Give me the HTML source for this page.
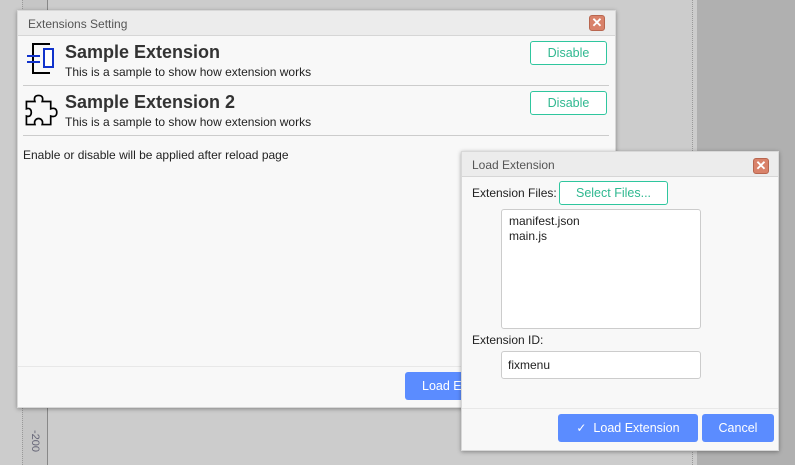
<!DOCTYPE html>
<html><head><style>
*{box-sizing:border-box;margin:0;padding:0}
body{width:795px;height:465px;background:#cccccc;position:relative;overflow:hidden;font-family:"Liberation Sans",Arial,sans-serif;color:#222}
.abs{position:absolute}
.dlg{position:absolute;background:#f8f8f8;box-shadow:0 1px 4px rgba(0,0,0,.35);border:1px solid #d8d8d8}
.tb{position:absolute;left:0;right:0;top:0;background:#ececec;border-bottom:1px solid #d6d6d6;font-size:12px;color:#555}
.close{position:absolute;width:16px;height:16px;background:#d9826a;border:1px solid #b8664f;border-radius:3px;color:#fff;font-size:13px;line-height:14px;text-align:center;font-weight:bold}
.gbtn{position:absolute;border:1px solid #2fc69e;border-radius:3px;background:#fff;color:#2fb890;font-size:12.5px;text-align:center}
.bbtn{position:absolute;background:#5b8cff;color:#fff;border-radius:3px;font-size:12.5px;text-align:center}
h3{font-size:18px;font-weight:bold;color:#333}
.desc{font-size:12px;color:#222}
.box{position:absolute;background:#fff;border:1px solid #ccc;border-radius:3px;font-size:12px}
</style></head><body>
<div class="abs" style="left:692px;top:0;width:1px;height:465px;border-left:1px dotted #999"></div>
<div class="abs" style="left:697px;top:0;width:98px;height:465px;background:#b0b0b0"></div>
<div class="abs" style="left:22px;top:0;width:26px;height:465px;background:#c6c6c6;border-left:1px dotted #999;border-right:1px solid #888"></div>
<div class="abs" style="left:41px;top:430px;font-size:11px;color:#667;transform:rotate(90deg);transform-origin:left top">-200</div>

<div class="dlg" style="left:17px;top:10px;width:599px;height:398px">
 <div class="tb" style="height:25px;padding:6px 0 0 10px">Extensions Setting</div>
 <div class="close" style="left:571px;top:4px">✕</div>
 <svg class="abs" style="left:7px;top:32px;width:30px;height:32px" width="30" height="32" viewBox="0 0 30 32">
  <path d="M25 1H8V30H25" fill="none" stroke="#000" stroke-width="2"/>
  <rect x="19" y="6" width="9" height="18" fill="#fff" stroke="#1133cc" stroke-width="2"/>
  <path d="M2 13H15M2 19H15" stroke="#1133cc" stroke-width="2"/>
 </svg>
 <h3 class="abs" style="left:47px;top:31px">Sample Extension</h3>
 <div class="desc abs" style="left:47px;top:54px">This is a sample to show how extension works</div>
 <div class="gbtn" style="left:512px;top:30px;width:77px;height:24px;line-height:22px">Disable</div>
 <div class="abs" style="left:5px;top:74px;width:586px;border-top:1px solid #ccc"></div>
 <svg class="abs" style="left:6px;top:82px;width:34px;height:34px" width="34" height="34" viewBox="1 1 28 28">
  <path d="M3 8H10C9 5 10 3 13 3S17 5 16 8H23V14C26 13 28 14 28 17S26 21 23 20V27H16C17 24 15 22 13 22S9 24 10 27H3V20C6 21 7 19 7 17S6 13 3 14Z" fill="none" stroke="#000" stroke-width="1.4"/>
 </svg>
 <h3 class="abs" style="left:47px;top:81px">Sample Extension 2</h3>
 <div class="desc abs" style="left:47px;top:104px">This is a sample to show how extension works</div>
 <div class="gbtn" style="left:512px;top:80px;width:77px;height:24px;line-height:22px">Disable</div>
 <div class="abs" style="left:5px;top:124px;width:586px;border-top:1px solid #ccc"></div>
 <div class="abs desc" style="left:5px;top:137px">Enable or disable will be applied after reload page</div>
 <div class="abs" style="left:0;top:355px;width:597px;border-top:1px solid #e8e8e8"></div>
 <div class="bbtn" style="left:387px;top:361px;width:110px;height:28px;line-height:28px;text-align:left;padding-left:17px">Load Extension</div>
</div>

<div class="dlg" style="left:461px;top:151px;width:318px;height:300px">
 <div class="tb" style="height:25px;padding:6px 0 0 10px">Load Extension</div>
 <div class="close" style="left:291px;top:6px">✕</div>
 <div class="abs desc" style="left:10px;top:34px">Extension Files:</div>
 <div class="gbtn" style="left:97px;top:29px;width:109px;height:24px;line-height:22px">Select Files...</div>
 <div class="box" style="left:39px;top:57px;width:200px;height:120px;padding:4px 7px;line-height:15px">manifest.json<br>main.js</div>
 <div class="abs desc" style="left:10px;top:181px">Extension ID:</div>
 <div class="box" style="left:39px;top:199px;width:200px;height:28px;padding:6px 6px">fixmenu</div>
 <div class="abs" style="left:0;top:256px;width:316px;border-top:1px solid #e8e8e8"></div>
 <div class="bbtn" style="left:96px;top:262px;width:140px;height:28px;line-height:28px"><span style="font-size:12px">✓</span>&nbsp; Load Extension</div>
 <div class="bbtn" style="left:240px;top:262px;width:72px;height:28px;line-height:28px">Cancel</div>
</div>
</body></html>
